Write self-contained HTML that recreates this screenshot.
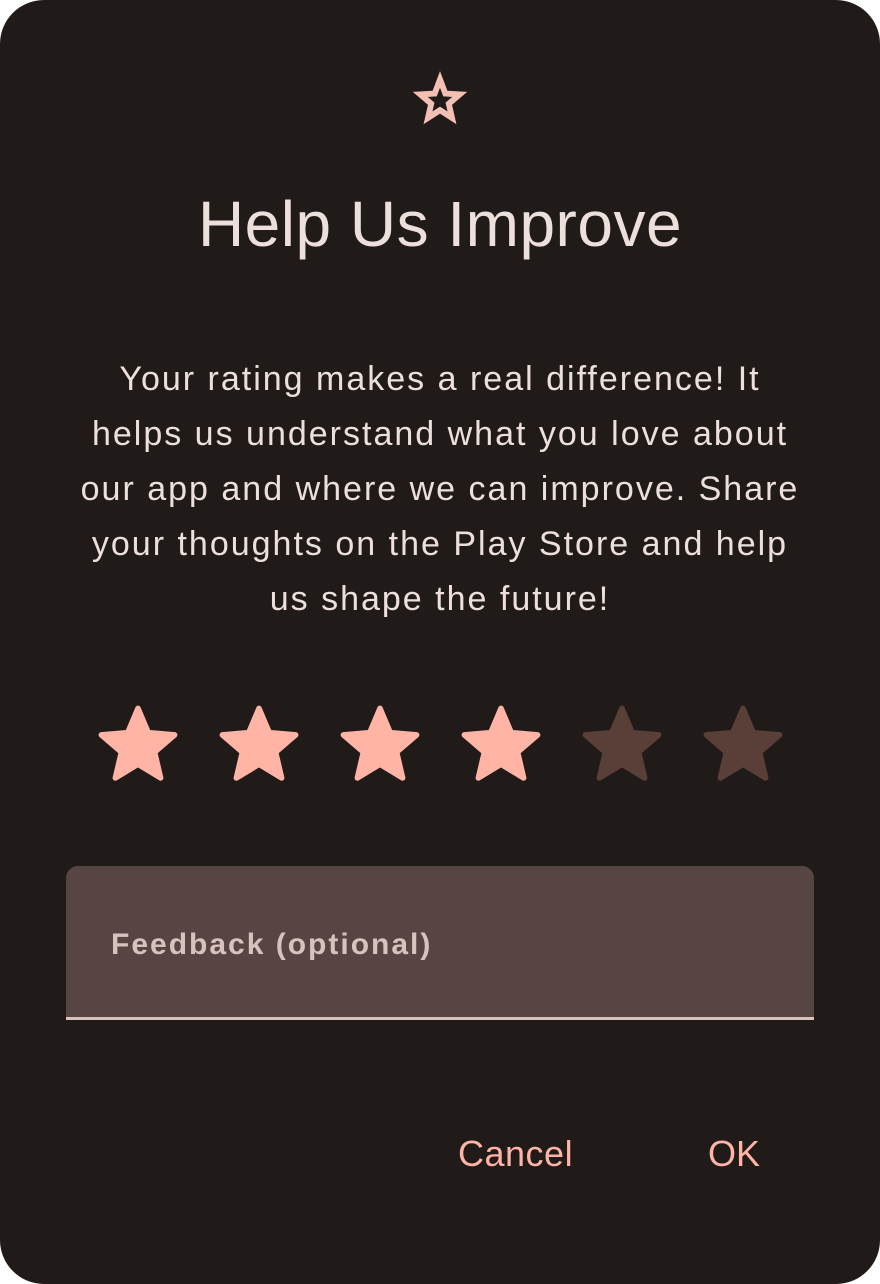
<!DOCTYPE html>
<html><head><style>
html,body{margin:0;padding:0;background:#fff;}
.card{position:relative;width:880px;height:1284px;background:#201a18;border-radius:44px;overflow:hidden;font-family:"Liberation Sans",sans-serif;}
.t{position:absolute;left:0;width:880px;text-align:center;color:#ede0dc;}
.s{position:absolute;top:701px;width:88px;height:88px;}
</style></head><body>
<div class="card">
<svg style="position:absolute;left:408px;top:68px" width="64" height="64" viewBox="0 0 24 24"><path d="M12 4.3L14.0 9.6 19.4 9.9 15.3 13.4 16.5 18.7 12 15.8 7.5 18.7 8.7 13.4 4.6 9.9 10.0 9.6Z" fill="none" stroke="#f5c0b4" stroke-width="2.2" stroke-linejoin="miter"/></svg>
<div class="t" style="top:186px;font-size:64px;line-height:76px;letter-spacing:0.5px;">Help Us Improve</div>
<div class="t" style="top:352px;font-size:34px;line-height:55px;left:70px;width:740px;letter-spacing:2px;">Your rating makes a real difference! It helps us understand what you love about our app and where we can improve. Share your thoughts on the Play Store and help us shape the future!</div>
<svg class="s" style="left:94px" viewBox="0 0 24 24"><path d="M12 17.27L18.18 21l-1.64-7.03L22 9.24l-7.19-.61L12 2 9.19 8.63 2 9.24l5.46 4.73L5.82 21z" fill="#ffb4a5" stroke="#ffb4a5" stroke-width="1.5" stroke-linejoin="round"/></svg>
<svg class="s" style="left:215px" viewBox="0 0 24 24"><path d="M12 17.27L18.18 21l-1.64-7.03L22 9.24l-7.19-.61L12 2 9.19 8.63 2 9.24l5.46 4.73L5.82 21z" fill="#ffb4a5" stroke="#ffb4a5" stroke-width="1.5" stroke-linejoin="round"/></svg>
<svg class="s" style="left:336px" viewBox="0 0 24 24"><path d="M12 17.27L18.18 21l-1.64-7.03L22 9.24l-7.19-.61L12 2 9.19 8.63 2 9.24l5.46 4.73L5.82 21z" fill="#ffb4a5" stroke="#ffb4a5" stroke-width="1.5" stroke-linejoin="round"/></svg>
<svg class="s" style="left:457px" viewBox="0 0 24 24"><path d="M12 17.27L18.18 21l-1.64-7.03L22 9.24l-7.19-.61L12 2 9.19 8.63 2 9.24l5.46 4.73L5.82 21z" fill="#ffb4a5" stroke="#ffb4a5" stroke-width="1.5" stroke-linejoin="round"/></svg>
<svg class="s" style="left:578px" viewBox="0 0 24 24"><path d="M12 17.27L18.18 21l-1.64-7.03L22 9.24l-7.19-.61L12 2 9.19 8.63 2 9.24l5.46 4.73L5.82 21z" fill="#5a3f39" stroke="#5a3f39" stroke-width="1.5" stroke-linejoin="round"/></svg>
<svg class="s" style="left:699px" viewBox="0 0 24 24"><path d="M12 17.27L18.18 21l-1.64-7.03L22 9.24l-7.19-.61L12 2 9.19 8.63 2 9.24l5.46 4.73L5.82 21z" fill="#5a3f39" stroke="#5a3f39" stroke-width="1.5" stroke-linejoin="round"/></svg>
<div style="position:absolute;left:66px;top:866px;width:748px;height:151px;background:#574543;border-radius:12px 12px 0 0;border-bottom:3px solid #d8c2bd;"></div>
<div style="position:absolute;left:111px;top:926px;font-size:30px;line-height:38px;color:#d8c2bd;font-weight:bold;letter-spacing:2px;">Feedback (optional)</div>
<div style="position:absolute;left:458px;top:1132px;font-size:36px;line-height:44px;color:#ffb4a5;letter-spacing:0.5px;">Cancel</div>
<div style="position:absolute;left:708px;top:1132px;font-size:36px;line-height:44px;color:#ffb4a5;">OK</div>
</div>
</body></html>
